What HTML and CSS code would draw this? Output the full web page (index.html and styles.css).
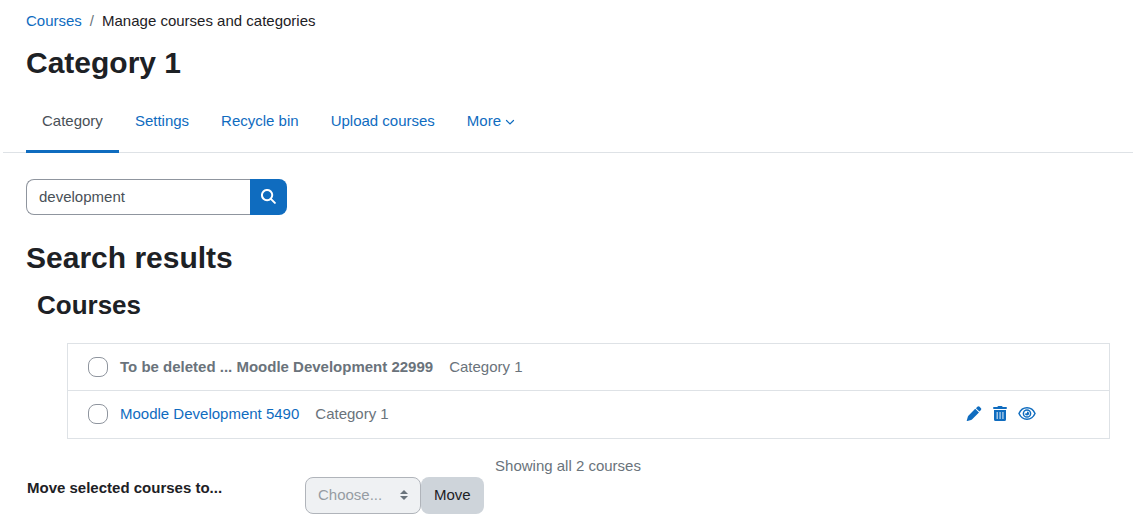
FILE: index.html
```
<!DOCTYPE html>
<html lang="en">
<head>
<meta charset="utf-8">
<meta name="viewport" content="width=device-width, initial-scale=1">
<title>Category 1</title>
<link rel="stylesheet" href="styles.css">
</head>
<body>
<header class="page-header">
  <nav aria-label="Breadcrumb">
    <ol class="breadcrumb">
      <li><a href="#">Courses</a></li>
      <li class="breadcrumb-current">Manage courses and categories</li>
    </ol>
  </nav>
  <h1 class="title">Category 1</h1>
</header>
<nav class="tabs" aria-label="Category">
  <a class="tab tab-active" href="#">Category</a>
  <a class="tab" href="#">Settings</a>
  <a class="tab" href="#">Recycle bin</a>
  <a class="tab" href="#">Upload courses</a>
  <a class="tab" href="#">More<svg class="chevron" viewBox="0 0 10 10" aria-hidden="true"><path d="M1.500 3.500 5 7l3.500-3.500"/></svg></a>
</nav>
<main class="content">
  <form class="search">
    <input class="search-input" type="text" value="development" aria-label="Search courses">
    <button class="search-button" type="button" aria-label="Search">
      <svg class="search-icon" viewBox="0 0 16 16" aria-hidden="true"><circle cx="6.500" cy="6.500" r="5.500"/><path d="m10.500 10.500 4.300 4.300"/></svg>
    </button>
  </form>
  <h2 class="title">Search results</h2>
  <h3 class="subtitle">Courses</h3>
  <ul class="courses">
    <li class="course">
      <input class="check" type="checkbox" id="course-1">
      <label class="course-name course-hidden" for="course-1">To be deleted ... Moodle Development 22999</label>
      <span class="muted">Category 1</span>
    </li>
    <li class="course">
      <input class="check" type="checkbox" aria-label="Moodle Development 5490">
      <a class="course-name" href="#">Moodle Development 5490</a>
      <span class="muted">Category 1</span>
      <span class="actions">
        <a href="#" aria-label="Edit"><svg class="icon" viewBox="0 0 16 16" aria-hidden="true"><path d="M11.600.8a1.700 1.700 0 0 1 2.400 0L15.200 2a1.700 1.700 0 0 1 0 2.400l-1.500 1.500-3.600-3.600zM9.300 2.900l4 4-7.500 7.400a2 2 0 0 1-.9.500L.9 16a.5.500 0 0 1-.6-.6l1.200-4.200a2 2 0 0 1 .5-.9z"/></svg></a>
        <a href="#" aria-label="Delete"><svg class="icon icon-trash" viewBox="0 0 14 15" aria-hidden="true"><path fill-rule="evenodd" d="M4.600.6Q4.800 0 5.400 0h3.200q.6 0 .8.600L9.700 1H13a1 1 0 0 1 0 2H1a1 1 0 0 1 0-2h3.300zM1 4h12v9.500q0 1.500-1.500 1.500h-9Q1 15 1 13.500zM3.700 6v7h.9V6zm2.900 0v7h.9V6zm2.900 0v7h.9V6z"/></svg></a>
        <a href="#" aria-label="Hide"><svg class="icon icon-eye" viewBox="0 0 18 15" aria-hidden="true"><g fill="none" stroke="currentColor" stroke-width="1.500"><path d="M1 7.500c1.600-3.700 4.500-5.700 8-5.700s6.400 2 8 5.700c-1.600 3.700-4.500 5.700-8 5.700S2.600 11.200 1 7.500z"/><circle cx="9" cy="7.500" r="3.600"/></g><path d="M9 5.400v1.100a1 1 0 0 1-1 1H6.900A2.100 2.100 0 1 0 9 5.400z"/></svg></a>
      </span>
    </li>
  </ul>
  <p class="summary muted">Showing all 2 courses</p>
  <form class="move">
    <label class="move-label" for="target">Move selected courses to...</label>
    <div class="move-controls">
      <span class="select-wrap">
        <select class="select" id="target" disabled><option>Choose...</option></select>
        <svg class="select-arrows" viewBox="0 0 8 10" aria-hidden="true"><path d="M4 0 0 4h8zM4 10 0 6h8z"/></svg>
      </span>
      <button class="move-button" type="button">Move</button>
    </div>
  </form>
</main>
</body>
</html>
```
FILE: styles.css
```
* { box-sizing: border-box; }
body {
  margin: 0;
  background: #fff;
  color: #1d2125;
  font: 15px/22px "Liberation Sans", Arial, sans-serif;
}
a { color: #0f6cbf; text-decoration: none; }
input, select, button { margin: 0; font: inherit; }
.page-header { padding: 10px 23px 0 26px; }
.breadcrumb {
  display: flex;
  margin: 0 0 13px;
  padding: 0;
  list-style: none;
}
.breadcrumb-current::before { content: "/"; padding: 0 8px; color: #6a737b; }
.title { margin: 0; font-size: 30px; line-height: 36px; }
.tabs {
  display: flex;
  margin: 8px 0 26px 3px;
  padding-left: 23px;
  border-bottom: 1px solid #dee2e6;
}
.tab {
  display: flex;
  align-items: center;
  height: 64px;
  margin-bottom: -1px;
  padding: 0 16px;
  border-bottom: 3px solid transparent;
  border-top: 3px solid transparent;
}
.tab-active { color: #495057; border-bottom-color: #0f6cbf; }
.chevron {
  width: 10px;
  height: 10px;
  margin: 2px 0 0 4px;
  fill: none;
  stroke: currentColor;
  stroke-width: 1.2;
  stroke-linecap: round;
}
.content { padding: 0 23px 18px 26px; }
.search { display: flex; margin-bottom: 25px; }
.search-input {
  width: 224px;
  height: 36px;
  padding: 0 12px 2px;
  border: 1px solid #8f959e;
  border-right: 0;
  border-radius: 8px 0 0 8px;
  background: #fff;
  color: #495057;
}
.search-button {
  display: flex;
  align-items: center;
  justify-content: center;
  width: 37px;
  padding: 0 0 2px;
  border: 0;
  border-radius: 0 8px 8px 0;
  background: #0f6cbf;
  color: #fff;
}
.search-icon {
  width: 15px;
  height: 15px;
  fill: none;
  stroke: currentColor;
  stroke-width: 2.1;
  stroke-linecap: round;
}
.subtitle { margin: 13px 0 22px 11px; font-size: 26px; line-height: 32px; }
.courses {
  margin: 0 0 16px 41px;
  padding: 0 0 1px;
  border: 1px solid #dee2e6;
  list-style: none;
}
.course {
  display: flex;
  align-items: center;
  padding: 12px 73px 12px 20px;
}
.course + .course { border-top: 1px solid #dee2e6; }
.check {
  appearance: none;
  width: 20px;
  height: 20px;
  margin-right: 12px;
  border: 1px solid #8f959e;
  border-radius: 8px;
  background: #fff;
}
.course-name { margin-right: 16px; }
.course-hidden { color: #6a737b; font-weight: bold; }
.muted { color: #6a737b; }
.actions { display: flex; gap: 11px; margin-left: auto; }
.actions a { display: flex; padding-bottom: 1px; }
.icon { width: 16px; height: 15px; fill: currentColor; }
.icon-trash { width: 14px; }
.icon-eye { width: 18px; }
.summary { margin: 0; text-align: center; }
.move { display: flex; padding-left: 1px; }
.move-label { width: 278px; font-weight: bold; }
.move-controls { display: flex; }
.select-wrap { position: relative; }
.select {
  appearance: none;
  display: block;
  width: 116px;
  height: 37px;
  padding: 0 30px 2px 12px;
  border: 1px solid #8f959e;
  border-radius: 8px;
  background: #e9ecef;
  color: #6a737b;
  opacity: 0.7;
}
.select-arrows {
  position: absolute;
  top: 13px;
  right: 13px;
  width: 8px;
  height: 10px;
  fill: #6a737b;
}
.move-button {
  padding: 0 13px 2px;
  border: 0;
  border-radius: 8px;
  background: #ced4da;
  color: #1d2125;
}
```
